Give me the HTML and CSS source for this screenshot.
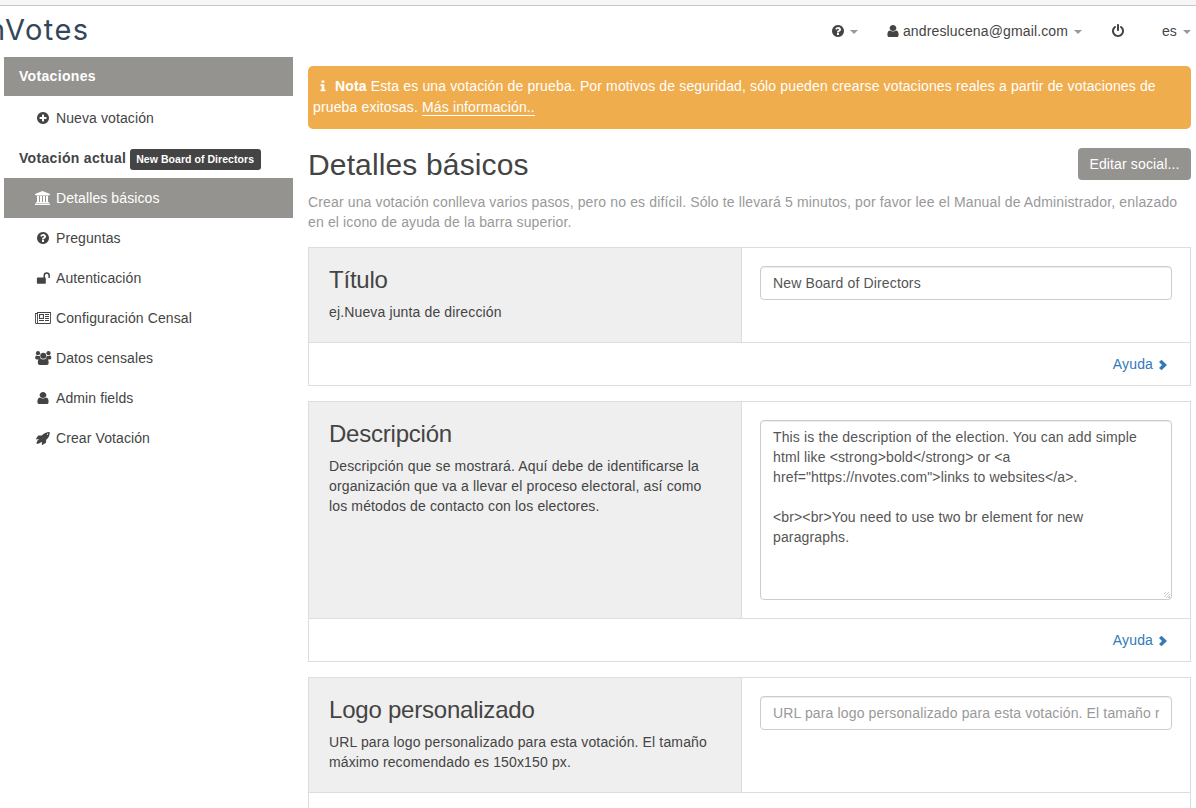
FILE: index.html
```html
<!DOCTYPE html>
<html lang="es">
<head>
<meta charset="utf-8">
<title>nVotes</title>
<link rel="stylesheet" href="styles.css">
</head>
<body>
<svg class="defs" aria-hidden="true">
  <symbol id="plus" viewBox="0 0 1792 1792"><path d="M1344 960v-128q0-26-19-45t-45-19h-256v-256q0-26-19-45t-45-19h-128q-26 0-45 19t-19 45v256h-256q-26 0-45 19t-19 45v128q0 26 19 45t45 19h256v256q0 26 19 45t45 19h128q26 0 45-19t19-45v-256h256q26 0 45-19t19-45zm320-64q0 209-103 385.5t-279.5 279.5-385.5 103-385.5-103-279.5-279.5-103-385.5 103-385.5 279.5-279.5 385.5-103 385.5 103 279.5 279.5 103 385.5z"/></symbol>
  <symbol id="question" viewBox="0 0 1792 1792"><path d="M1024 1376v-192q0-14-9-23t-23-9h-192q-14 0-23 9t-9 23v192q0 14 9 23t23 9h192q14 0 23-9t9-23zm256-672q0-88-55.5-163t-138.5-116-170-41q-243 0-371 213-15 24 8 42l132 100q7 6 19 6 16 0 25-12 53-68 86-92 34-24 86-24 48 0 85.5 26t37.5 59q0 38-20 61t-68 45q-63 28-115.5 86.5t-52.5 125.5v36q0 14 9 23t23 9h192q14 0 23-9t9-23q0-19 21.5-49.5t54.5-49.5q32-18 49-28.5t46-35 44.5-48 28-60.5 12.5-81zm384 192q0 209-103 385.5t-279.5 279.5-385.5 103-385.5-103-279.5-279.5-103-385.5 103-385.5 279.5-279.5 385.5-103 385.5 103 279.5 279.5 103 385.5z"/></symbol>
  <symbol id="user" viewBox="96 0 1600 1792" preserveAspectRatio="none"><path d="M1536 1399q0 109-62.5 187t-150.5 78h-854q-88 0-150.5-78t-62.5-187q0-85 8.5-160.5t31.5-152 58.500-131 94-89 134.500-34.500q131 128 313 128t313-128q76 0 134.500 34.500t94 89 58.500 131 31.500 152 8.500 160.500zm-256-887q0 159-112.500 271.500t-271.500 112.500-271.500-112.500-112.500-271.500 112.500-271.500 271.500-112.500 271.500 112.500 112.500 271.500z"/></symbol>
  <symbol id="power" viewBox="0 0 1792 1792"><path d="M1664 896q0 156-61 298t-164 245-245 164-298 61-298-61-245-164-164-245-61-298q0-182 80.5-343t226.5-270q43-32 95.5-25t83.5 50q32 42 24.5 94.5t-49.5 84.5q-98 74-151.5 181t-53.5 228q0 104 40.5 198.5t109.5 163.5 163.5 109.5 198.5 40.5 198.5-40.5 163.5-109.5 109.5-163.5 40.5-198.5q0-121-53.5-228t-151.5-181q-42-32-49.5-84.5t24.5-94.5q31-43 84-50t95 25q146 109 226.5 270t80.5 343zm-640-768v640q0 52-38 90t-90 38-90-38-38-90v-640q0-52 38-90t90-38 90 38 38 90z"/></symbol>
  <symbol id="bank" viewBox="0 0 18 14"><path d="M8.5 0 16 3v1h-1q0 .5-.5.5h-12Q2 4.500 2 4H1V3zM3 5h2v6h1V5h2v6h1V5h2v6h1V5h2v6h.5q.5 0 .5.500v.5H2v-.5Q2 11 2.500 11H3zM1.500 12.500h14q.5 0 .5.500v1H1v-1q0-.5.500-.5z"/></symbol>
  <symbol id="unlock" viewBox="0 0 18 14"><path d="M3.700 6.500h5.800V4.500a3.200 3.200 0 0 1 6.400 0v2q0 .5-.5.500h-.500q-.5 0-.5-.5v-2a1.700 1.700 0 0 0-3.400 0v2q.8 0 .8.800v4.700q0 .8-.8.800H3.700q-.8 0-.8-.8V7.300q0-.8.800-.8z"/></symbol>
  <symbol id="news" viewBox="0 0 18 14"><path fill-rule="evenodd" d="M3 1h14v10.700q0 1.300-1.300 1.300H2.400Q1 13 1 11.500V2h2zm.9 1v10h11.600q.6 0 .6-.6V2zM3 3H1.900v8.400q0 .6.6.6t.5-.7zM5 3h5v5H5zm1.100 1.100v2.800h2.800V4.100zM11 3h4v1h-4zm0 2h4v1h-4zm0 2h4v1h-4zM5 10h5V9H5zm6 0h4V9h-4z"/></symbol>
  <symbol id="users" viewBox="0 0 18 14"><circle cx="4" cy="2.200" r="2.100"/><circle cx="14.500" cy="2.200" r="2.100"/><circle cx="9.250" cy="4.800" r="3"/><path d="M2.900 4.500q1.300.9 2.900.3 0 1.600 1 2.700-1.300 0-2.200 1H3.300Q1.200 8.500 1.200 7c0-1.400.4-2.500 1.700-2.500zM15.600 4.500q-1.300.9-2.900.3 0 1.600-1 2.700 1.300 0 2.200 1h1.300q2.100 0 2.100-1.500c0-1.400-.4-2.500-1.700-2.500zM6.500 7.500q2.700 2 5.500 0c2 .1 2.700 1.900 2.700 4.300q0 2.200-2 2.200H5.800q-2 0-2-2.200c0-2.400.7-4.200 2.700-4.300z"/></symbol>
  <symbol id="rocket" viewBox="0 0 18 14"><path fill-rule="evenodd" d="M15.700.9c.1 3.500-.8 5.500-3.500 7.900l-.2 2.900-3.700 2.300-.6-.4.3-2.400-.8-.3c-.9 1.400-2.400 1.600-4.700 1.800.2-2 .8-3.300 2.200-3.900l-.3-.7-2 .3-.4-.6 2.200-3.200 3.500-.2C9.900 2.300 12.300 1 15.700.9zm-2.200 1.700a.6.600 0 1 0 0 1.200.6.600 0 0 0 0-1.200z"/></symbol>
  <symbol id="info" viewBox="0 0 6 12"><path d="M1.500.5h2.800v2.300H1.500zM.5 4.200h3.800v5.300h1.200v1.800h-5V9.500h1.200V6H.5z"/></symbol>
  <symbol id="chevron" viewBox="0 0 10 12"><path d="m1 3 2.500-2.300L9 6l-5.500 5.300L1 9l3-3z"/></symbol>
</svg>
<div class="browser-edge"></div>
<header class="topbar">
  <div class="logo">nVotes</div>
  <nav class="topnav">
    <a class="nav-help"><svg class="icon"><use href="#question"/></svg><i class="caret"></i></a>
    <a class="nav-user"><svg class="icon"><use href="#user"/></svg><span>andreslucena@gmail.com</span><i class="caret"></i></a>
    <a class="nav-power"><svg class="icon"><use href="#power"/></svg></a>
    <a class="nav-lang"><span>es</span><i class="caret"></i></a>
  </nav>
</header>
<div class="layout">
  <aside class="sidebar">
    <div class="side-title">Votaciones</div>
    <a class="side-item"><svg class="icon-fw"><use href="#plus" x="2" width="14" height="14"/></svg>Nueva votación</a>
    <div class="side-current"><span>Votación actual</span><span class="label">New Board of Directors</span></div>
    <a class="side-item active"><svg class="icon-fw"><use href="#bank"/></svg>Detalles básicos</a>
    <a class="side-item"><svg class="icon-fw"><use href="#question" x="2" width="14" height="14"/></svg>Preguntas</a>
    <a class="side-item"><svg class="icon-fw"><use href="#unlock"/></svg>Autenticación</a>
    <a class="side-item"><svg class="icon-fw"><use href="#news"/></svg>Configuración Censal</a>
    <a class="side-item"><svg class="icon-fw"><use href="#users"/></svg>Datos censales</a>
    <a class="side-item"><svg class="icon-fw"><use href="#user" x="2" width="14" height="14"/></svg>Admin fields</a>
    <a class="side-item"><svg class="icon-fw"><use href="#rocket"/></svg>Crear Votación</a>
  </aside>
  <main class="content">
    <div class="notice"><svg class="info-icon"><use href="#info"/></svg><b>Nota</b> Esta es una votación de prueba. Por motivos de seguridad, sólo pueden crearse votaciones reales a partir de votaciones de<br>prueba exitosas. <a class="more">Más información..</a></div>
    <div class="heading"><h1>Detalles básicos</h1><button class="social">Editar social...</button></div>
    <p class="intro">Crear una votación conlleva varios pasos, pero no es difícil. Sólo te llevará 5 minutos, por favor lee el Manual de Administrador, enlazado<br>en el icono de ayuda de la barra superior.</p>
    <section class="card">
      <div class="row">
        <div class="desc"><h2>Título</h2><p>ej.Nueva junta de dirección</p></div>
        <div class="field"><input class="control" type="text" value="New Board of Directors"></div>
      </div>
      <div class="foot"><a>Ayuda<svg class="chev"><use href="#chevron"/></svg></a></div>
    </section>
    <section class="card">
      <div class="row">
        <div class="desc"><h2>Descripción</h2><p>Descripción que se mostrará. Aquí debe de identificarse la<br>organización que va a llevar el proceso electoral, así como<br>los métodos de contacto con los electores.</p></div>
        <div class="field"><textarea class="control area">This is the description of the election. You can add simple
html like &lt;strong&gt;bold&lt;/strong&gt; or &lt;a
href="https://nvotes.com"&gt;links to websites&lt;/a&gt;.

&lt;br&gt;&lt;br&gt;You need to use two br element for new
paragraphs.</textarea></div>
      </div>
      <div class="foot"><a>Ayuda<svg class="chev"><use href="#chevron"/></svg></a></div>
    </section>
    <section class="card last">
      <div class="row">
        <div class="desc"><h2>Logo personalizado</h2><p>URL para logo personalizado para esta votación. El tamaño<br>máximo recomendado es 150x150 px.</p></div>
        <div class="field"><input class="control" type="text" placeholder="URL para logo personalizado para esta votación. El tamaño recomendado es 150x150 px."></div>
      </div>
    </section>
  </main>
</div>
</body>
</html>
```
FILE: styles.css
```css
* { box-sizing: border-box; }
body {
  margin: 0;
  height: 808px;
  overflow: hidden;
  background: #fff;
  color: #444;
  font: 14px/20px "Liberation Sans", Arial, sans-serif;
  letter-spacing: .14px;
}
h1, h2, p { margin: 0; font-weight: 400; }
svg { fill: currentColor; flex: none; }
.defs { display: none; }
.browser-edge { height: 6px; background: #f5f6f7; border-bottom: 1px solid #c8c8c8; }

.topbar { height: 51px; display: flex; justify-content: space-between; overflow: hidden; }
.logo {
  margin-left: -12px;
  padding-top: 4px;
  font: 29px/40px Inter, sans-serif;
  letter-spacing: 1.4px;
  color: #34475a;
}
.topnav { display: flex; height: 50px; align-items: center; padding-right: 5px; }
.topnav a { display: flex; align-items: center; }
.icon { width: 14px; height: 14px; }
.caret {
  width: 0;
  height: 0;
  margin: 2px 0 0 5px;
  border: 4px solid transparent;
  border-top-color: #999;
  border-bottom: 0;
}
.nav-help { margin-right: 28px; }
.nav-user { margin-right: 29px; }
.nav-user span { margin-left: 3px; width: 165px; white-space: nowrap; }
.nav-user .caret { margin-left: 6px; }
.nav-power { margin-right: 37px; }
.nav-lang .caret { margin-left: 6px; }

.layout { display: flex; }
.sidebar { width: 289px; margin-left: 4px; flex: none; }
.side-title {
  height: 39px;
  margin-bottom: 2px;
  padding-left: 15px;
  line-height: 38px;
  font-weight: 700;
  letter-spacing: .32px;
  color: #fff;
  background: #959390;
}
.side-item { display: flex; align-items: center; height: 40px; padding-left: 30px; letter-spacing: .1px; }
.side-item.active { color: #fff; background: #959390; }
.icon-fw { width: 18px; height: 14px; margin-right: 4px; }
.side-current {
  display: flex;
  align-items: center;
  height: 40px;
  padding-left: 15px;
  font-weight: 700;
  letter-spacing: .32px;
}
.label {
  margin: 3px 0 0 4px;
  height: 21px;
  width: 131px;
  padding-left: 6px;
  border-radius: 3px;
  background: #444;
  color: #fff;
  font-size: 10.5px;
  line-height: 21px;
  letter-spacing: .05px;
  white-space: nowrap;
}

.content { width: 883px; margin-left: 15px; padding-top: 9px; }
.notice {
  height: 63px;
  padding: 10px 5px;
  border-radius: 5px;
  background: #f0ad4e;
  color: #fff;
  line-height: 21px;
  white-space: nowrap;
}
.info-icon { width: 6px; height: 12px; margin: 0 9px 0 7px; vertical-align: -1px; }
.more { border-bottom: 1px solid #fff; }
.heading { display: flex; justify-content: space-between; margin-top: 19px; height: 44px; }
h1 { font-size: 30px; line-height: 33px; }
.social {
  width: 113px;
  height: 32px;
  padding: 0;
  border: 0;
  border-radius: 4px;
  background: #959390;
  color: #fff;
  font: inherit;
  letter-spacing: inherit;
}
.intro { color: #999; white-space: nowrap; height: 55px; }

.card { margin-bottom: 15px; border: 1px solid #ddd; }
.row { display: flex; border-bottom: 1px solid #ddd; }
.desc {
  width: 433px;
  padding: 18px 20px 20px;
  border-right: 1px solid #ddd;
  background: #efefef;
  white-space: nowrap;
}
h2 { margin-bottom: 8px; font-size: 24px; line-height: 28px; letter-spacing: -.22px; }
.field { flex: 1; padding: 18px; }
.control {
  display: block;
  width: 100%;
  height: 34px;
  padding: 6px 12px;
  border: 1px solid #ccc;
  border-radius: 4px;
  box-shadow: inset 0 1px 1px rgba(0, 0, 0, .075);
  background: #fff;
  color: #555;
  font: inherit;
  letter-spacing: inherit;
}
.control::placeholder { color: #999; }
.area { height: 180px; }
.area::-webkit-resizer {
  background: repeating-linear-gradient(135deg, transparent 0 1px, #ccc 1px 2px) right 1px bottom 1px / 6px 6px no-repeat;
  clip-path: polygon(100% 0, 100% 100%, 0 100%);
}
.foot { display: flex; justify-content: flex-end; align-items: center; height: 42px; padding-right: 22px; }
.foot a { display: flex; align-items: center; color: #337ab7; }
.chev { width: 10px; height: 12px; margin: 2px 0 0 5px; }
.last { height: 131px; border-bottom: 0; margin-bottom: 0; }
```
